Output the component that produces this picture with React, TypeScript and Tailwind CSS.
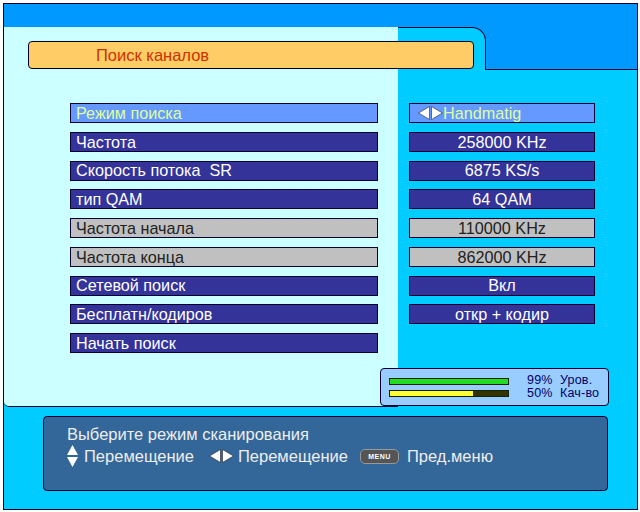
import React from "react";

type Row = {
  label: string;
  value?: string;
  kind: "active" | "dark" | "gray";
};

const rows: Row[] = [
  { label: "Режим поиска", value: "Handmatig", kind: "active" },
  { label: "Частота", value: "258000 KHz", kind: "dark" },
  { label: "Скорость потока\u00a0 SR", value: "6875 KS/s", kind: "dark" },
  { label: "тип QAM", value: "64 QAM", kind: "dark" },
  { label: "Частота начала", value: "110000 KHz", kind: "gray" },
  { label: "Частота конца", value: "862000 KHz", kind: "gray" },
  { label: "Сетевой поиск", value: "Вкл", kind: "dark" },
  { label: "Бесплатн/кодиров", value: "откр + кодир", kind: "dark" },
  { label: "Начать поиск", kind: "dark" },
];

const boxStyles = {
  active: "bg-[#6699ff] text-[#ddff99]",
  dark: "bg-[#333399] text-white",
  gray: "bg-[#c0c0c0] text-[#222222]",
};

function LeftRightIcon({ className = "" }: { className?: string }) {
  return (
    <svg width="25" height="14" viewBox="0 0 25 14" className={className}>
      <polygon points="0.5,7 11.5,0.5 11.5,13.5" fill="white" stroke="#223" strokeWidth="0.6" />
      <polygon points="24.5,7 13.5,0.5 13.5,13.5" fill="white" stroke="#223" strokeWidth="0.6" />
    </svg>
  );
}

function UpDownIcon() {
  return (
    <svg width="11" height="22" viewBox="0 0 11 22">
      <polygon points="5.5,0 11,10 0,10" fill="white" />
      <line x1="0" y1="11" x2="11" y2="11" stroke="#336699" strokeWidth="1" />
      <polygon points="5.5,22 11,12 0,12" fill="white" />
    </svg>
  );
}

function Background() {
  return (
    <div className="col-start-1 row-start-1 flex flex-col bg-[#00ccff]">
      <div className="h-[23px] bg-[#0099ff]" />
      <div className="flex flex-1">
        <div className="w-[394px]">
          <div className="h-[380px] bg-[#ccffff] border-b border-[#000033] rounded-bl-[5px]" />
        </div>
        <div className="flex-1">
          <div className="flex h-[43px] bg-[#0099ff]">
            <div className="w-[88px] bg-[#00ccff] border-t border-r border-[#000033] rounded-tr-[14px]" />
            <div className="flex-1 border-b border-[#000033]" />
          </div>
        </div>
      </div>
    </div>
  );
}

function Content() {
  return (
    <div className="col-start-1 row-start-1 flex flex-col">
      <div className="mt-[37px] ml-[24px] w-[446px] h-[28px] bg-[#ffcc66] border border-[#000033] rounded-[4px] flex items-center pl-[67px] text-[16.5px] text-[#cc3300]">
        Поиск каналов
      </div>

      <div className="mt-[34px] ml-[66px] flex flex-col gap-[8.75px]">
        {rows.map((r, i) => (
          <div key={i} className="flex gap-[31px]">
            <div
              className={`w-[308px] h-[20px] border border-[#000033] flex items-center pl-[5px] text-[16.2px] leading-none whitespace-nowrap ${boxStyles[r.kind]}`}
            >
              {r.label}
            </div>
            {r.value &&
              (r.kind === "active" ? (
                <div className="w-[186px] h-[20px] border border-[#000033] flex items-center pl-[8px] text-[16.2px] leading-none bg-[#6699ff] text-[#ddff99]">
                  <LeftRightIcon />
                  {r.value}
                </div>
              ) : (
                <div
                  className={`w-[186px] h-[20px] border border-[#000033] flex items-center justify-center text-[16.2px] leading-none whitespace-nowrap ${boxStyles[r.kind]}`}
                >
                  {r.value}
                </div>
              ))}
          </div>
        ))}
      </div>

      <div className="mt-[15px] ml-[376px] w-[229px] h-[38px] bg-[#99ccff] border border-[#000033] rounded-[4px] flex items-center pl-[8px]">
        <div className="flex flex-col gap-[5px]">
          <div className="w-[120px] h-[7px] bg-[#22dd22] border border-[#112211]" />
          <div className="w-[120px] h-[7px] bg-[#333300] border border-[#112211] flex">
            <div className="w-[70%] bg-[#ffff33]" />
          </div>
        </div>
        <div className="ml-[18px] flex flex-col text-[12.5px] leading-[13px] text-[#000066] tracking-[0.2px] whitespace-nowrap">
          <span>99%&nbsp; Уров.</span>
          <span>50%&nbsp; Кач-во</span>
        </div>
      </div>

      <div className="mt-[10px] ml-[39px] w-[565px] h-[75px] bg-[#336699] border border-[#000033] rounded-[4px] pl-[23px] pt-[7px] text-[16.5px] text-[#eeeeee] whitespace-nowrap">
        <div className="leading-[20px]">Выберите режим сканирования</div>
        <div className="flex items-center h-[24px]">
          <UpDownIcon />
          <span className="ml-[6px]">Перемещение</span>
          <LeftRightIcon className="ml-[15px] mr-[4px]" />
          <span>Перемещение</span>
          <span className="ml-[12px] mr-[8px] w-[39px] h-[15px] rounded-[5px] bg-[#555555] border border-[#999999] flex items-center justify-center text-[7px] font-bold text-white leading-none tracking-[0.5px]">
            MENU
          </span>
          <span>Пред.меню</span>
        </div>
      </div>
    </div>
  );
}

export default function App() {
  return (
    <div
      className="w-[640px] h-[512px] bg-white pt-[3px] pl-[3px]"
      style={{ fontFamily: '"Liberation Sans", Arial, sans-serif' }}
    >
      <div className="w-[635px] h-[507px] border border-[#000033] grid overflow-hidden">
        <Background />
        <Content />
      </div>
    </div>
  );
}
